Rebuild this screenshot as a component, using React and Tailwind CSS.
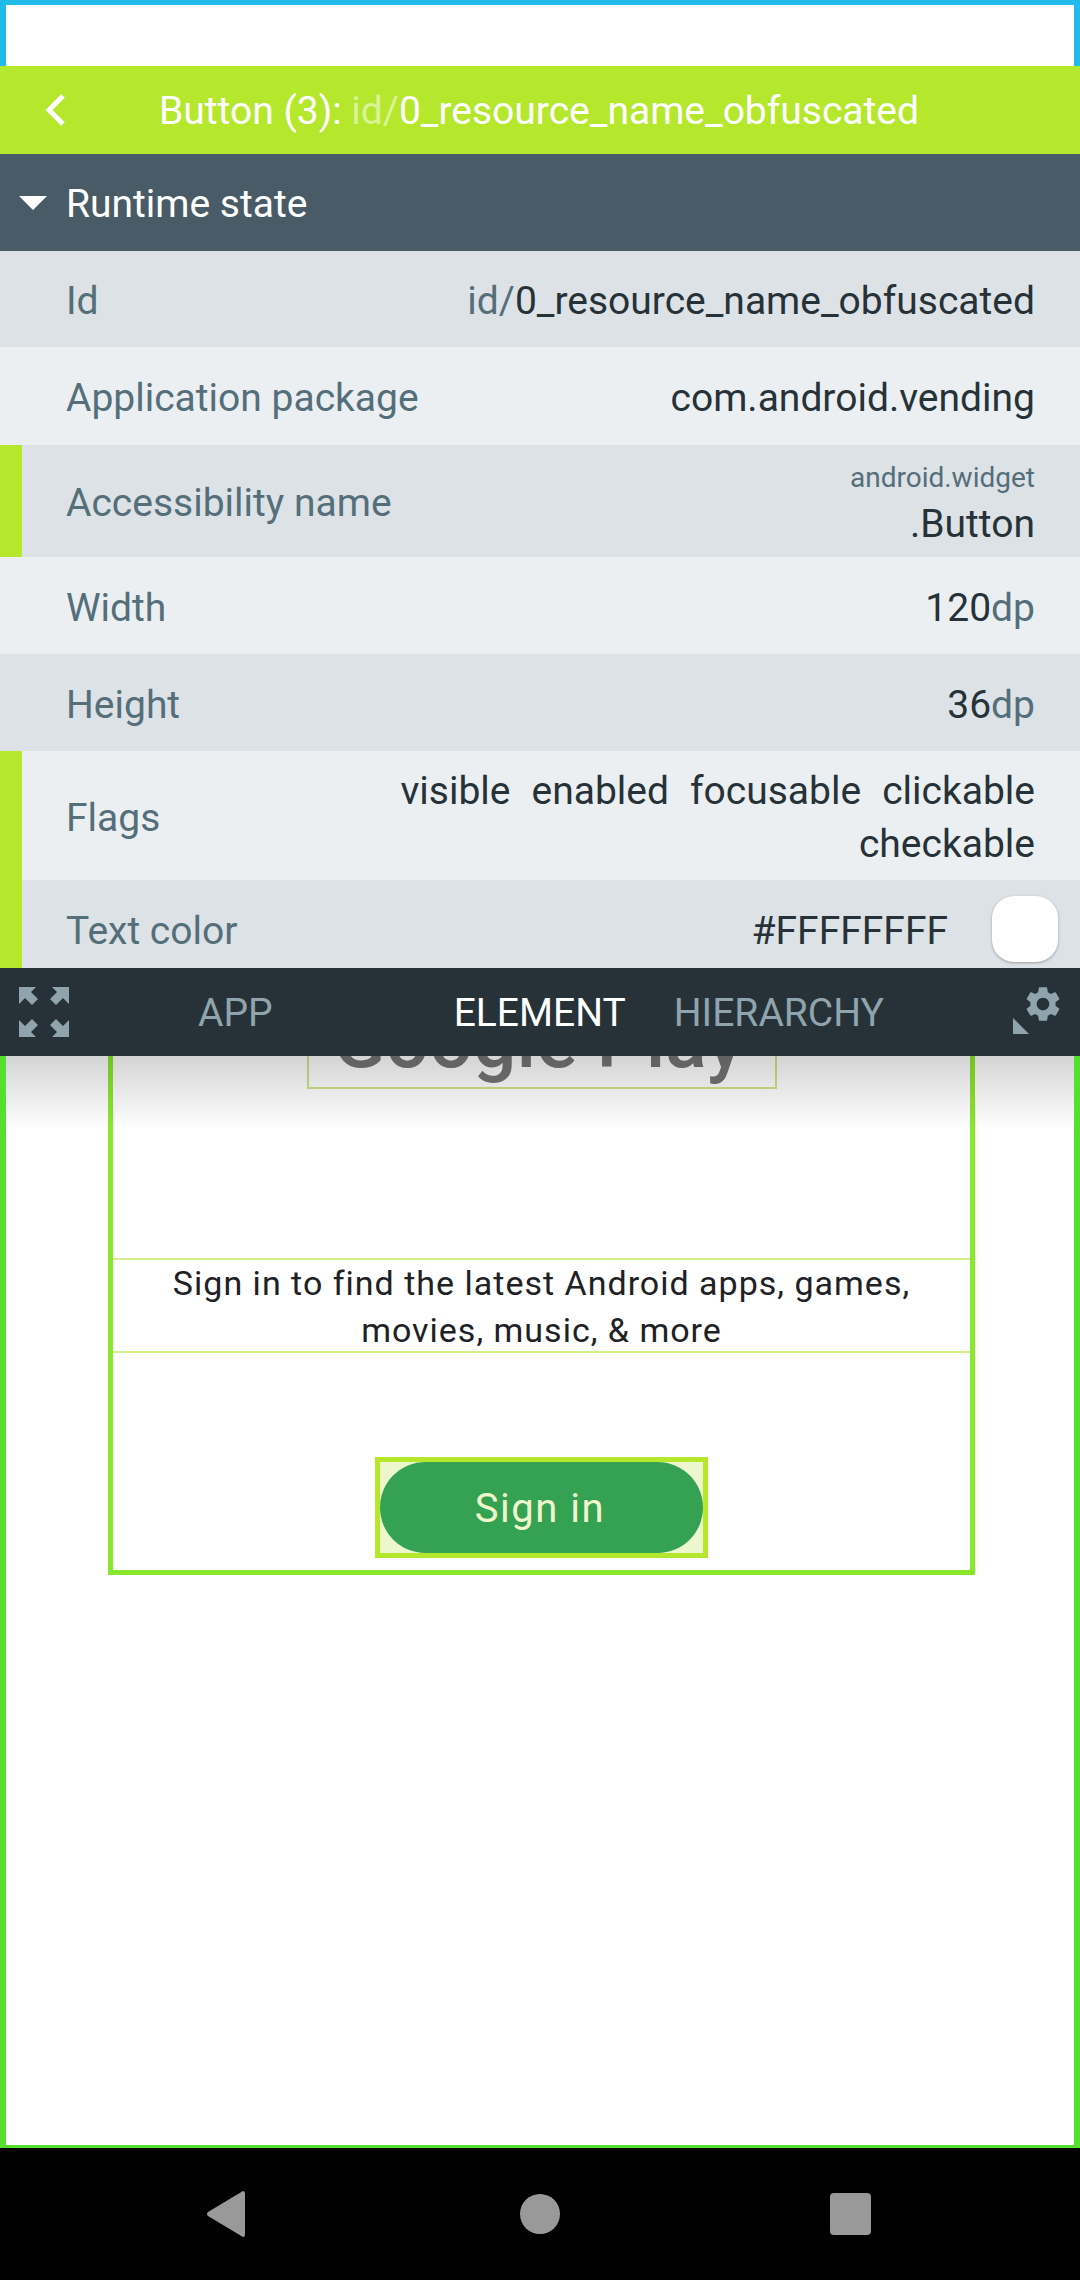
const rows = [
  { label: 'Id', h: 'h-[96px]', bg: 'bg-[#dde2e6]', value: <><span className="text-[#546e7a]">id/</span>0_resource_name_obfuscated</> },
  { label: 'Application package', h: 'h-[98px]', bg: 'bg-[#ebeff2]', value: 'com.android.vending' },
];

function Row({ label, h, bg, accent, children }) {
  return (
    <div className={`flex shrink-0 items-center justify-between pr-[45px] pt-[5px] ${h} ${bg} ${accent ? 'border-l-[22px] border-[#b5e72d] pl-[44px]' : 'pl-[66px]'}`}>
      <span className="text-[#546e7a]">{label}</span>
      <div className="text-right text-[#263238]">{children}</div>
    </div>
  );
}

function ExpandIcon() {
  return (
    <svg width="50" height="50" viewBox="0 0 50 50" fill="#90a4ae">
      <path d="M0 0H17L12 5L19 12L13 18L6 11L0 17Z" />
      <path d="M50 0H33L38 5L31 12L37 18L44 11L50 17Z" />
      <path d="M0 50H17L12 45L19 38L13 32L6 39L0 33Z" />
      <path d="M50 50H33L38 45L31 38L37 32L44 39L50 33Z" />
    </svg>
  );
}

function GearIcon() {
  return (
    <svg width="48" height="48" viewBox="0 0 48 48" fill="#90a4ae">
      <path d="M0 32L16 48H0Z" />
      <g transform="translate(9 -3) scale(1.75)">
        <path d="M19.14 12.94c.04-.3.06-.61.06-.94s-.02-.64-.07-.94l2.03-1.58c.18-.14.23-.41.12-.61l-1.92-3.32c-.12-.22-.37-.29-.59-.22l-2.39.96c-.5-.38-1.03-.7-1.62-.94l-.36-2.54c-.04-.24-.24-.41-.48-.41h-3.84c-.24 0-.43.17-.47.41l-.36 2.54c-.59.24-1.13.57-1.62.94l-2.39-.96c-.22-.08-.47 0-.59.22L2.74 8.87c-.12.21-.08.47.12.61l2.03 1.58c-.05.3-.09.63-.09.94s.02.64.07.94l-2.03 1.58c-.18.14-.23.41-.12.61l1.92 3.32c.12.22.37.29.59.22l2.39-.96c.5.38 1.03.7 1.62.94l.36 2.54c.05.24.24.41.48.41h3.84c.24 0 .44-.17.47-.41l.36-2.54c.59-.24 1.13-.56 1.62-.94l2.39.96c.22.08.47 0 .59-.22l1.92-3.32c.12-.22.07-.47-.12-.61l-2.01-1.58zM12 15.6c-1.98 0-3.6-1.62-3.6-3.6s1.62-3.6 3.6-3.6 3.6 1.62 3.6 3.6-1.62 3.6-3.6 3.6z" />
      </g>
    </svg>
  );
}

export default function App() {
  return (
    <div className="flex h-[2280px] w-[1080px] flex-col overflow-hidden bg-black text-[39px] font-['Roboto',sans-serif]">
      <div className="h-[66px] shrink-0 border-x-[6px] border-t-[5px] border-[#20bbe8] bg-white" />

      <div className="flex h-[88px] shrink-0 items-center bg-[#b5e72d] pt-[3px] text-white">
        <svg className="ml-[45px] -mt-[3px]" width="20" height="32" viewBox="0 0 20 32" fill="none" stroke="#fff" strokeWidth="5">
          <path d="M18 2L4 16L18 30" />
        </svg>
        <span className="ml-[94px]">Button (3): <span className="text-white/50">id/</span>0_resource_name_obfuscated</span>
      </div>

      <div className="flex h-[97px] shrink-0 items-center bg-[#485b66] pt-[4px] text-white">
        <svg className="ml-[19px] -mt-[4px]" width="28" height="14" viewBox="0 0 28 14" fill="#fff">
          <path d="M0 0H28L14 14Z" />
        </svg>
        <span className="ml-[19px]">Runtime state</span>
      </div>

      {rows.map((row) => (
        <Row key={row.label} label={row.label} h={row.h} bg={row.bg}>{row.value}</Row>
      ))}
      <Row label="Accessibility name" h="h-[112px]" bg="bg-[#dde2e6]" accent>
        <div className="mt-[11px] text-[28px] leading-[30px] text-[#546e7a]">android.widget</div>
        <div className="leading-[62px]">.Button</div>
      </Row>
      <Row label="Width" h="h-[97px]" bg="bg-[#ebeff2]">120<span className="text-[#546e7a]">dp</span></Row>
      <Row label="Height" h="h-[97px]" bg="bg-[#dde2e6]">36<span className="text-[#546e7a]">dp</span></Row>
      <Row label="Flags" h="h-[129px]" bg="bg-[#ebeff2]" accent>
        <div className="flex w-[640px] flex-wrap justify-end gap-x-[21px] leading-[53px]">
          <span>visible</span><span>enabled</span><span>focusable</span><span>clickable</span><span>checkable</span>
        </div>
      </Row>
      {/* this row runs on under the toolbar, so only 88 of its 97px show */}
      <div className="h-[88px] shrink-0 overflow-hidden border-l-[22px] border-[#b5e72d] bg-[#dde2e6]">
        <div className="flex h-[97px] items-center justify-between pl-[44px] pr-[22px]">
          <span className="pt-[5px] text-[#546e7a]">Text color</span>
          <div className="flex items-center gap-[44px] text-[#263238]">
            <span className="pt-[5px]">#FFFFFFFF</span>
            <div className="h-[66px] w-[66px] rounded-[22px] bg-white shadow-[0_1px_3px_rgba(0,0,0,0.3)]" />
          </div>
        </div>
      </div>

      <div className="flex h-[88px] shrink-0 items-center bg-[#263238] text-[#90a4ae]">
        <div className="ml-[19px]"><ExpandIcon /></div>
        <span className="ml-[129px] pt-[3px]">APP</span>
        <span className="ml-[181px] pt-[3px] text-white">ELEMENT</span>
        <span className="ml-[48px] pt-[3px]">HIERARCHY</span>
        <div className="ml-auto mb-[4px] mr-[19px]"><GearIcon /></div>
      </div>

      <div className="relative min-h-0 flex-1 overflow-hidden border-x-[6px] border-b-[3px] border-[#55e030] bg-white">
        <div className="-mt-[150px] ml-[102px] flex h-[669px] w-[867px] flex-col items-center border-[5px] border-[#8ae82c]">
          <div className="flex h-[178px] w-[470px] shrink-0 items-end justify-center whitespace-nowrap border-2 border-[#cde585] pr-[6px] text-[77px] font-medium leading-[91px] text-[#757575]">
            Google Play
          </div>
          <div className="mt-[169px] flex h-[95px] w-full shrink-0 flex-col items-center justify-center border-y-[2px] border-[#d4f08b] pt-[3px] text-center text-[34px] leading-[47px] tracking-[1px] text-[#202124]">
            <span>Sign in to find the latest Android apps, games,</span>
            <span>movies, music, &amp; more</span>
          </div>
          <div className="mt-[104px] box-border h-[101px] w-[333px] shrink-0 border-[5px] border-[#b5e72d] bg-[#edf7ce]">
            <div className="flex h-full w-full items-center justify-center rounded-full bg-[#34a153] pt-[3px] pr-[3px] text-[40px] tracking-[1.5px] text-[#eef8cc]">
              Sign in
            </div>
          </div>
        </div>
        <div className="pointer-events-none absolute inset-x-0 top-0 h-[74px] bg-gradient-to-b from-black/[0.17] to-transparent" />
      </div>

      <div className="flex h-[132px] shrink-0 items-center">
        <svg className="ml-[207px]" width="38" height="46" viewBox="0 0 38 46" fill="#999">
          <path d="M36 0Q38 0 38 3V43Q38 46 36 46L1 25Q-1 23 1 21Z" />
        </svg>
        <div className="ml-[275px] h-[40px] w-[40px] rounded-full bg-[#999]" />
        <div className="ml-[270px] h-[42px] w-[41px] rounded-[4px] bg-[#999]" />
      </div>
    </div>
  );
}
